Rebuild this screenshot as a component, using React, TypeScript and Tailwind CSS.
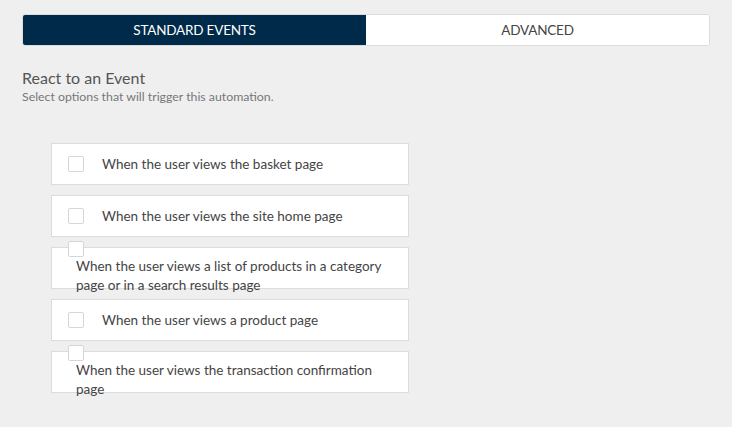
import React, { useState } from "react";

const events = [
    "When the user views the basket page",
    "When the user views the site home page",
    "When the user views a list of products in a category page or in a search results page",
    "When the user views a product page",
    "When the user views the transaction confirmation page",
];

export default function App() {
    const [tab, setTab] = useState("standard");
    const [checked, setChecked] = useState<boolean[]>(events.map(() => false));

    return (
        <div
            className="w-[732px] h-[427px] bg-[#efefef] px-[22px] pt-[14px] text-[#444]"
            style={{ fontFamily: "Lato, 'Noto Sans', sans-serif" }}
        >
            <div className="flex w-[688px] h-[32px] border border-[#dcdcdc] rounded-[3px] overflow-hidden bg-white">
                <button
                    onClick={() => setTab("standard")}
                    className={`w-1/2 text-[13.5px] tracking-[-0.2px] ${tab === "standard" ? "bg-[#002a4a] text-white" : "bg-white text-[#444]"}`}
                >
                    STANDARD EVENTS
                </button>
                <button
                    onClick={() => setTab("advanced")}
                    className={`w-1/2 text-[13.5px] tracking-[-0.2px] ${tab === "advanced" ? "bg-[#002a4a] text-white" : "bg-white text-[#444]"}`}
                >
                    ADVANCED
                </button>
            </div>

            <h2 className="mt-[22px] text-[16px] leading-[20px] text-[#555]">React to an Event</h2>
            <p className="mt-[1px] text-[12.3px] leading-[16px] text-[#777]">
                Select options that will trigger this automation.
            </p>

            <div className="mt-[38px] ml-[29px] flex flex-col gap-[10px] w-[358px]">
                {events.map((label, i) => (
                    <label
                        key={i}
                        className="flex flex-wrap items-center content-center h-[42px] px-4 bg-white border border-[#dcdcdc] cursor-pointer"
                    >
                        <span
                            onClick={() => setChecked(checked.map((c, j) => (j === i ? !c : c)))}
                            className={`w-4 h-4 mr-[10px] border border-[#d6d6d6] rounded-[2px] ${checked[i] ? "bg-[#002a4a]" : "bg-white"}`}
                        />
                        <span className="pl-2 text-[13.5px] leading-[19px] text-[#444]">{label}</span>
                    </label>
                ))}
            </div>
        </div>
    );
}
